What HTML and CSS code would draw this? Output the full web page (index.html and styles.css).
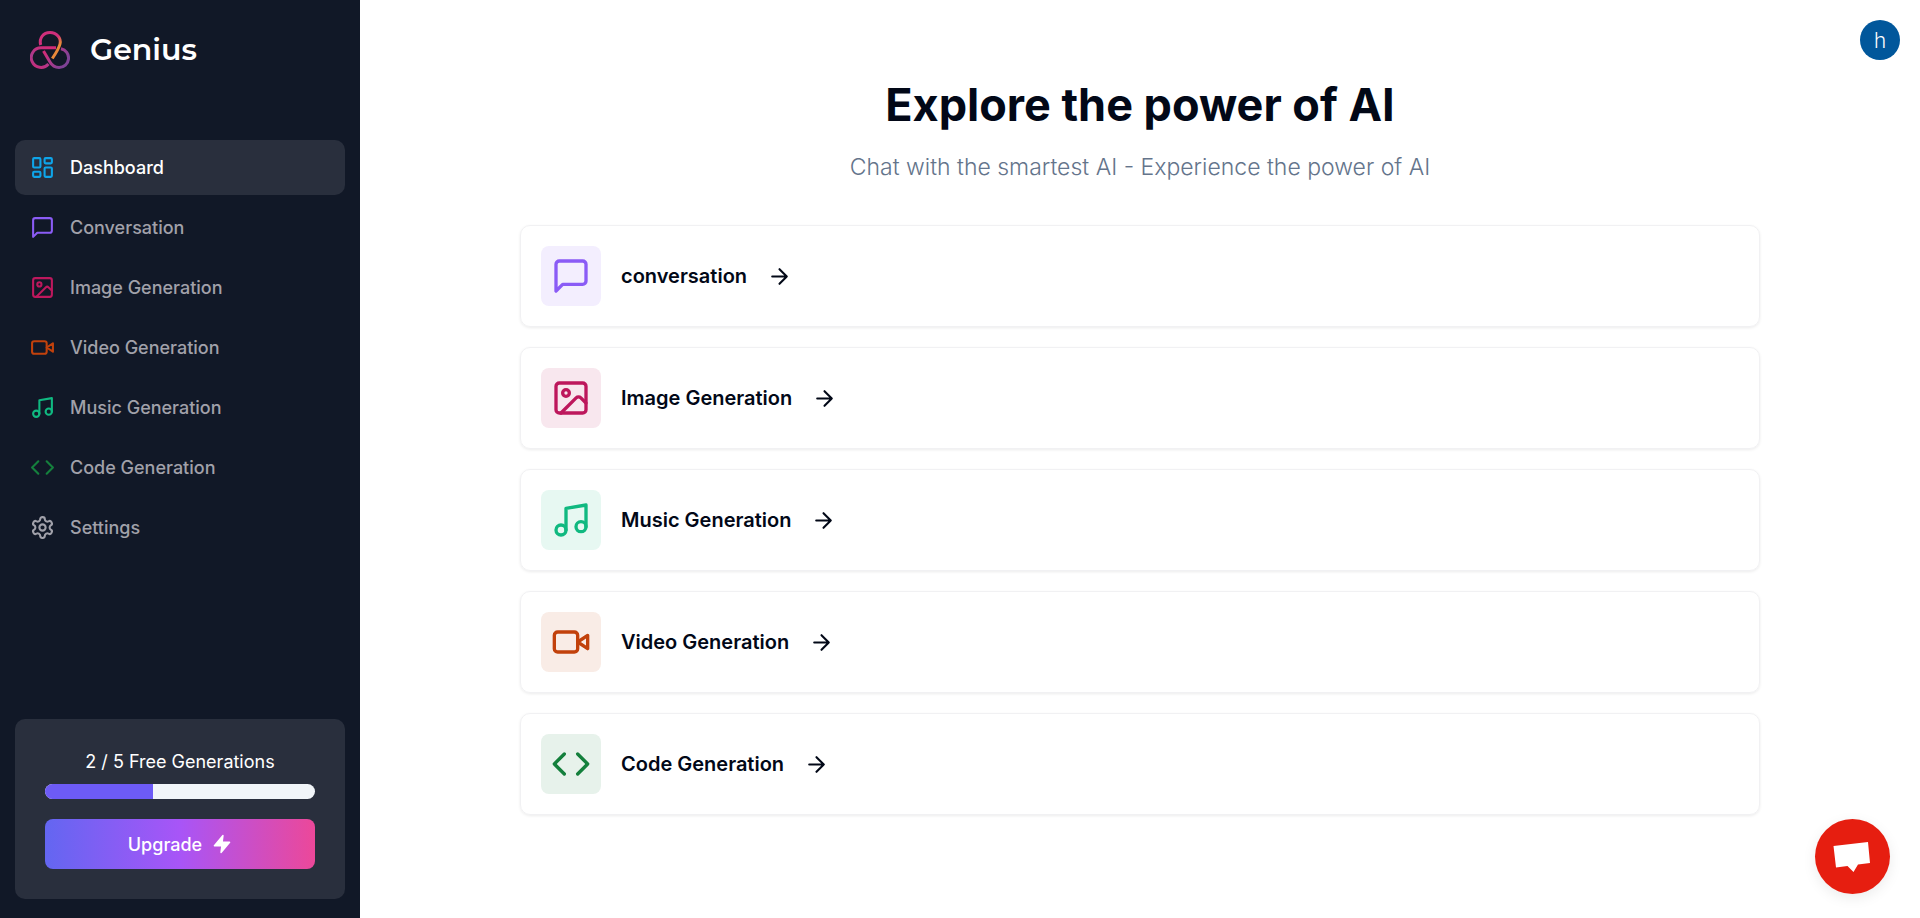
FILE: index.html
```
<!DOCTYPE html>
<html lang="en">
<head>
<meta charset="utf-8">
<meta name="viewport" content="width=device-width, initial-scale=1">
<title>Genius</title>
<link rel="stylesheet" href="styles.css">
</head>
<body>
<svg class="sprite" aria-hidden="true">
  <symbol id="dashboard" viewBox="0 0 24 24"><rect x="3" y="3" width="7" height="9" rx="1"/><rect x="14" y="3" width="7" height="5" rx="1"/><rect x="14" y="12" width="7" height="9" rx="1"/><rect x="3" y="16" width="7" height="5" rx="1"/></symbol>
  <symbol id="message" viewBox="0 0 24 24"><path d="M21 15a2 2 0 0 1-2 2H7l-4 4V5a2 2 0 0 1 2-2h14a2 2 0 0 1 2 2z"/></symbol>
  <symbol id="image" viewBox="0 0 24 24"><rect x="3" y="3" width="18" height="18" rx="2"/><circle cx="9" cy="9" r="2"/><path d="m21 15-3.086-3.086a2 2 0 0 0-2.828 0L6 21"/></symbol>
  <symbol id="video" viewBox="0 0 24 24"><path d="m22 8-6 4 6 4V8Z"/><rect x="2" y="6" width="14" height="12" rx="2"/></symbol>
  <symbol id="music" viewBox="0 0 24 24"><path d="M9 18V5l12-2v13"/><circle cx="6" cy="18" r="3"/><circle cx="18" cy="16" r="3"/></symbol>
  <symbol id="code" viewBox="0 0 24 24"><path d="m16 18 6-6-6-6M8 6l-6 6 6 6"/></symbol>
  <symbol id="settings" viewBox="0 0 24 24"><path d="M12.22 2h-.44a2 2 0 0 0-2 2v.18a2 2 0 0 1-1 1.73l-.43.25a2 2 0 0 1-2 0l-.15-.08a2 2 0 0 0-2.73.73l-.22.38a2 2 0 0 0 .73 2.73l.15.1a2 2 0 0 1 1 1.72v.51a2 2 0 0 1-1 1.74l-.15.09a2 2 0 0 0-.73 2.73l.22.38a2 2 0 0 0 2.73.73l.15-.08a2 2 0 0 1 2 0l.43.25a2 2 0 0 1 1 1.73V20a2 2 0 0 0 2 2h.44a2 2 0 0 0 2-2v-.18a2 2 0 0 1 1-1.73l.43-.25a2 2 0 0 1 2 0l.15.08a2 2 0 0 0 2.73-.73l.22-.39a2 2 0 0 0-.73-2.73l-.15-.08a2 2 0 0 1-1-1.74v-.5a2 2 0 0 1 1-1.74l.15-.09a2 2 0 0 0 .73-2.73l-.22-.38a2 2 0 0 0-2.73-.73l-.15.08a2 2 0 0 1-2 0l-.43-.25a2 2 0 0 1-1-1.73V4a2 2 0 0 0-2-2z"/><circle cx="12" cy="12" r="3"/></symbol>
  <symbol id="arrow" viewBox="0 0 24 24"><path d="M5 12h14M12 5l7 7-7 7"/></symbol>
  <symbol id="zap" viewBox="0 0 24 24"><path fill="currentColor" d="M13 2 3 14h9l-1 8 10-12h-9l1-8z"/></symbol>
</svg>
<div class="app">
  <aside class="sidebar">
    <a class="brand" href="#">
      <svg class="brand-logo" viewBox="0 0 40 40" aria-hidden="true">
        <defs>
          <linearGradient id="g-top" gradientUnits="userSpaceOnUse" x1="26" y1="8" x2="31" y2="13"><stop offset="0" stop-color="#cf2f7b"/><stop offset="1" stop-color="#e8893a"/></linearGradient>
          <linearGradient id="g-left" gradientUnits="userSpaceOnUse" x1="18" y1="18" x2="10" y2="38"><stop offset="0" stop-color="#d02c78"/><stop offset=".6" stop-color="#a83a8c"/><stop offset="1" stop-color="#c22f7e"/></linearGradient>
          <linearGradient id="g-right" gradientUnits="userSpaceOnUse" x1="15" y1="22" x2="34" y2="34"><stop offset="0" stop-color="#d02c78"/><stop offset=".4" stop-color="#b0398a"/><stop offset="1" stop-color="#7f4296"/></linearGradient>
        </defs>
        <path stroke="url(#g-right)" d="M13.500 21 20 32C22 35.500 25 37.500 29 37.500a9.500 9.500 0 0 0 2-18.800"/>
        <path stroke="url(#g-left)" d="M26 17.800H11.200A9.800 9.800 0 1 0 18.500 34"/>
        <path stroke="url(#g-top)" d="M10.700 15C8.800 8 13.500 2.600 20 2.600S31.500 8 30 14C29 18 25 24.500 22.300 28.500"/>
      </svg>
      <span class="brand-name">Genius</span>
    </a>
    <nav class="nav">
      <a class="nav-link active" href="#"><svg class="icon sky"><use href="#dashboard"/></svg>Dashboard</a>
      <a class="nav-link" href="#"><svg class="icon violet"><use href="#message"/></svg>Conversation</a>
      <a class="nav-link" href="#"><svg class="icon pink"><use href="#image"/></svg>Image Generation</a>
      <a class="nav-link" href="#"><svg class="icon orange"><use href="#video"/></svg>Video Generation</a>
      <a class="nav-link" href="#"><svg class="icon emerald"><use href="#music"/></svg>Music Generation</a>
      <a class="nav-link" href="#"><svg class="icon green"><use href="#code"/></svg>Code Generation</a>
      <a class="nav-link" href="#"><svg class="icon"><use href="#settings"/></svg>Settings</a>
    </nav>
    <section class="quota">
      <p class="quota-text" id="quota-label">2 / 5 Free Generations</p>
      <div class="progress" role="progressbar" aria-labelledby="quota-label" aria-valuemin="0" aria-valuemax="5" aria-valuenow="2"><div class="progress-fill" style="width: 40%"></div></div>
      <button class="upgrade" type="button">Upgrade<svg class="icon zap"><use href="#zap"/></svg></button>
    </section>
  </aside>
  <div class="content">
    <header class="topbar"><button class="avatar" type="button" aria-label="Account">h</button></header>
    <main class="main">
      <div class="intro">
        <h1 class="title">Explore the power of AI</h1>
        <p class="subtitle">Chat with the smartest AI - Experience the power of AI</p>
      </div>
      <div class="tools">
        <a class="tool" href="#"><span class="tile violet"><svg class="icon large"><use href="#message"/></svg></span><span class="tool-name">conversation</span><svg class="icon"><use href="#arrow"/></svg></a>
        <a class="tool" href="#"><span class="tile pink"><svg class="icon large"><use href="#image"/></svg></span><span class="tool-name">Image Generation</span><svg class="icon"><use href="#arrow"/></svg></a>
        <a class="tool" href="#"><span class="tile emerald"><svg class="icon large"><use href="#music"/></svg></span><span class="tool-name">Music Generation</span><svg class="icon"><use href="#arrow"/></svg></a>
        <a class="tool" href="#"><span class="tile orange"><svg class="icon large"><use href="#video"/></svg></span><span class="tool-name">Video Generation</span><svg class="icon"><use href="#arrow"/></svg></a>
        <a class="tool" href="#"><span class="tile green"><svg class="icon large"><use href="#code"/></svg></span><span class="tool-name">Code Generation</span><svg class="icon"><use href="#arrow"/></svg></a>
      </div>
    </main>
  </div>
</div>
<button class="chat" type="button" aria-label="Open chat">
  <svg class="chat-icon" viewBox="0 0 40 32" aria-hidden="true"><path fill="#fff" d="M0.500 5 35 1l2 21-12 1.500L20.500 31l-6-6L3 26.500z"/></svg>
</button>
</body>
</html>
```
FILE: styles.css
```
*,
*::before,
*::after {
  box-sizing: border-box;
}

body {
  margin: 0;
  background: #fff;
  color: #020817;
  font-family: Inter, "Liberation Sans", sans-serif;
  font-size: 20px;
}

h1,
p {
  margin: 0;
}

a {
  color: inherit;
  text-decoration: none;
}

button {
  border: 0;
  padding: 0;
  font: inherit;
  cursor: pointer;
}

.sprite {
  display: none;
}

.icon {
  flex: none;
  width: 25px;
  height: 25px;
  fill: none;
  stroke: currentColor;
  stroke-width: 2;
  stroke-linecap: round;
  stroke-linejoin: round;
}

.icon.large {
  width: 40px;
  height: 40px;
}

.sky { color: #0ea5e9; }
.violet { color: #8b5cf6; }
.pink { color: #be185d; }
.orange { color: #c2410c; }
.emerald { color: #10b981; }
.green { color: #15803d; }

.app {
  display: flex;
  min-height: 100vh;
}

.sidebar {
  display: flex;
  flex-direction: column;
  flex: none;
  width: 360px;
  padding: 30px 15px 19px;
  background: #111827;
  color: #fff;
}

.brand {
  display: flex;
  align-items: center;
  gap: 20px;
  margin-bottom: 70px;
  padding-left: 15px;
}

.brand-logo {
  width: 40px;
  height: 40px;
  fill: none;
  stroke-width: 3;
}

.brand-name {
  font-family: Montserrat, Inter, sans-serif;
  font-size: 30px;
  font-weight: 600;
  line-height: 40px;
}

.nav {
  display: flex;
  flex-direction: column;
  gap: 5px;
  color: #a1a1aa;
}

.nav-link {
  display: flex;
  align-items: center;
  gap: 15px;
  padding: 15px;
  border-radius: 10px;
  font-size: 18px;
  font-weight: 500;
  line-height: 25px;
}

.nav-link.active {
  background: #292f3d;
  color: #fff;
}

.quota {
  display: flex;
  flex-direction: column;
  margin-top: auto;
  padding: 30px;
  border-radius: 10px;
  background: #292f3d;
}

.quota-text {
  margin-bottom: 10px;
  font-size: 18px;
  line-height: 25px;
  text-align: center;
}

.progress {
  height: 15px;
  margin-bottom: 20px;
  border-radius: 8px;
  background: #f1f5f9;
  overflow: hidden;
}

.progress-fill {
  height: 100%;
  background: #6d5bf6;
}

.upgrade {
  display: flex;
  align-items: center;
  justify-content: center;
  gap: 10px;
  height: 50px;
  border-radius: 8px;
  background: linear-gradient(to right, #6366f1, #a855f7, #ec4899);
  color: #fff;
  font-size: 18px;
  font-weight: 500;
}

.icon.zap {
  width: 20px;
  height: 20px;
}

.content {
  flex: 1;
  min-width: 0;
}

.topbar {
  display: flex;
  justify-content: flex-end;
  padding: 20px;
}

.avatar {
  width: 40px;
  height: 40px;
  border-radius: 50%;
  background: #01579b;
  color: #fff;
  font-family: Roboto, sans-serif;
  font-size: 22px;
  font-weight: 300;
}

.intro {
  display: flex;
  flex-direction: column;
  gap: 20px;
  margin-bottom: 40px;
  text-align: center;
}

.title {
  font-size: 45px;
  font-weight: 700;
  line-height: 50px;
}

.subtitle {
  color: #64748b;
  font-size: 23px;
  font-weight: 300;
  line-height: 35px;
}

.tools {
  display: flex;
  flex-direction: column;
  gap: 20px;
  padding: 0 160px;
}

.tool {
  display: flex;
  align-items: center;
  gap: 20px;
  padding: 20px;
  border: 1px solid #f1f1f3;
  border-radius: 10px;
  box-shadow: 0 1px 3px rgba(0, 0, 0, 0.08);
}

.tile {
  position: relative;
  display: flex;
  padding: 10px;
  border-radius: 8px;
  overflow: hidden;
}

.tile::before {
  content: "";
  position: absolute;
  inset: 0;
  background: currentColor;
  opacity: 0.1;
}

.tool-name {
  font-weight: 600;
  line-height: 30px;
}

.chat {
  position: fixed;
  right: 30px;
  bottom: 24px;
  display: flex;
  align-items: center;
  justify-content: center;
  width: 75px;
  height: 75px;
  border-radius: 50%;
  background: #e61e10;
  box-shadow: 0 4px 14px rgba(0, 0, 0, 0.08);
}

.chat-icon {
  width: 40px;
  height: 32px;
}
```
